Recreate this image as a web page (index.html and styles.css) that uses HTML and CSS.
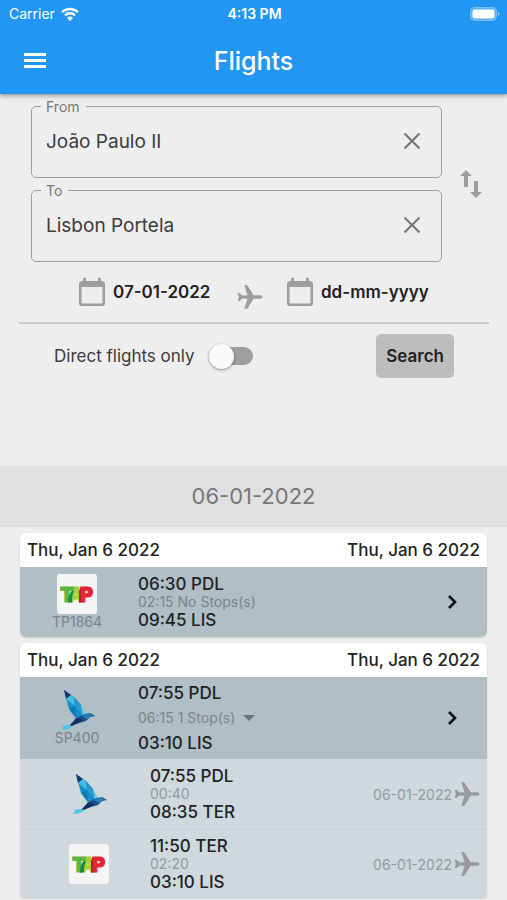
FILE: index.html
```
<!DOCTYPE html>
<html lang="en">
<head>
  <meta charset="utf-8">
  <meta name="viewport" content="width=device-width, initial-scale=1">
  <title>Flights</title>
  <link rel="stylesheet" href="styles.css">
</head>
<body>
  <!-- shared icons -->
  <svg class="defs" aria-hidden="true">
    <symbol id="plane" viewBox="1 1 23 22">
      <path d="M22.3 10.4H15.8L10.500 1.900Q9.900 1 8.900 1H7.300L10.200 10.400 5.300 10.700 3.300 8.300H1.200L2.300 12 1.200 15.700H3.300L5.300 13.300 10.200 13.600 7.300 23H8.900Q9.900 23 10.500 22.100L15.800 13.600H22.300A1.600 1.600 0 0 0 22.300 10.400Z"/>
    </symbol>
    <symbol id="calendar" viewBox="0 0 26 28">
      <path fill-rule="evenodd" d="M4 0h3v3h12V0h3v3h1a3 3 0 0 1 3 3v19a3 3 0 0 1-3 3H3a3 3 0 0 1-3-3V6a3 3 0 0 1 3-3h1zM2.500 9v15.500a1 1 0 0 0 1 1h19a1 1 0 0 0 1-1V9z"/>
    </symbol>
    <symbol id="clear" viewBox="0 0 18 18">
      <path d="M1.500 1.500l15 15M16.500 1.500l-15 15" fill="none" stroke="currentColor" stroke-width="2"/>
    </symbol>
    <symbol id="chevron" viewBox="0 0 24 24">
      <path d="M9 6l6 6-6 6" fill="none" stroke="currentColor" stroke-width="2.600"/>
    </symbol>
    <symbol id="tap" viewBox="0 0 40 40">
      <rect width="40" height="40" rx="3" fill="#f5f5f5"/>
      <g class="tap-text">
        <text x="11" y="28" fill="#a9cf38" stroke="#a9cf38">A</text>
        <text x="3" y="28" fill="#5cb53c" stroke="#5cb53c">T</text>
        <text x="23" y="28" fill="#e42534" stroke="#e42534">P</text>
      </g>
      <path d="M11 28.500c0-5 1-9 4-12l2 1c-2 4-2 7-2 11z" fill="#169044"/>
      <path d="M22 17l2-4v15.500h-2z" fill="#b81d2b"/>
    </symbol>
    <symbol id="bird" viewBox="0 0 40 40">
      <path d="M7 0l10 7 7 8 2 11-7 2-7-9z" fill="#178fc9"/>
      <path d="M7 0l7 5-5 4z" fill="#17356e"/>
      <path d="M14 5l3 2 1 9-9-7z" fill="#45bce8"/>
      <path d="M18 16l-6 3 7 9z" fill="#087bb8"/>
      <path d="M17 7l7 8 2 11-8-10z" fill="#2998d1"/>
      <path d="M24 15l2 11 3-3z" fill="#65cdeb"/>
      <path d="M19 28l9-4 5-1 5 3-5 1-4 4-10 3-8 4z" fill="#19508c"/>
      <path d="M25 26l8-3 2 3-5 3z" fill="#2d7fb5"/>
      <path d="M20 28l6 2-7 4-8 3z" fill="#142d64"/>
      <path d="M11 35l-7 1 3 1-3 3 7-1 5-3z" fill="#4cc7ec"/>
    </symbol>
  </svg>

  <header class="top">
    <div class="status">
      <span class="carrier">Carrier
        <svg width="18" height="14" viewBox="0 0 18 14" fill="none" stroke="#fff" stroke-width="2.400">
          <path d="M1 5.200a11.500 11.500 0 0 1 16 0M4 8.400a7 7 0 0 1 10 0"/>
          <path d="M9 14l-3-3a4.300 4.300 0 0 1 6 0z" fill="#fff" stroke="none"/>
        </svg>
      </span>
      <span class="clock">4:13 PM</span>
      <svg class="battery" width="30" height="14" viewBox="0 0 30 14">
        <rect x=".5" y=".5" width="26" height="13" rx="4" fill="#59b0f8" stroke="#7cc1f9"/>
        <rect x="2.500" y="2.500" width="22" height="9" rx="2" fill="#fff"/>
        <path d="M28 5c2 1 2 3 0 4z" fill="#8dcafa"/>
      </svg>
    </div>
    <div class="appbar">
      <button class="icon-btn" aria-label="Menu">
        <svg width="22" height="16" viewBox="0 0 22 16" fill="#fff"><path d="M0 0h22v3H0zM0 6h22v3H0zM0 12h22v3H0z"/></svg>
      </button>
      <h1>Flights</h1>
    </div>
  </header>

  <form class="search" onsubmit="return false">
    <div class="route">
      <div class="places">
        <fieldset>
          <legend><label for="from">From</label></legend>
          <div class="place">
            <input id="from" type="text" value="João Paulo II">
            <button type="button" class="icon-btn" aria-label="Clear from"><svg width="18" height="18"><use href="#clear"/></svg></button>
          </div>
        </fieldset>
        <fieldset>
          <legend><label for="to">To</label></legend>
          <div class="place">
            <input id="to" type="text" value="Lisbon Portela">
            <button type="button" class="icon-btn" aria-label="Clear to"><svg width="18" height="18"><use href="#clear"/></svg></button>
          </div>
        </fieldset>
      </div>
      <button type="button" class="icon-btn swap" aria-label="Swap airports">
        <svg width="22" height="28" viewBox="0 0 22 28"><path d="M6 0l6 6H8v11H4V6H0zM14 11h4v11h4l-6 6-6-6h4z"/></svg>
      </button>
    </div>

    <div class="dates">
      <label class="date">
        <svg width="26" height="28"><use href="#calendar"/></svg>
        <input type="text" value="07-01-2022" aria-label="Departure date">
      </label>
      <svg class="between" width="26" height="34" viewBox="0 -10 26 34"><use href="#plane" width="26" height="24"/></svg>
      <label class="date">
        <svg width="26" height="28"><use href="#calendar"/></svg>
        <input type="text" placeholder="dd-mm-yyyy" aria-label="Return date">
      </label>
    </div>

    <div class="options">
      <label class="direct">Direct flights only <input type="checkbox" class="switch"></label>
      <button class="submit">Search</button>
    </div>
  </form>

  <h2 class="day">06-01-2022</h2>

  <main class="results">
    <article class="card">
      <div class="card-head"><span>Thu, Jan 6 2022</span><span>Thu, Jan 6 2022</span></div>
      <div class="flight">
        <div class="airline">
          <svg width="40" height="40"><use href="#tap"/></svg>
          <span>TP1864</span>
        </div>
        <div class="times">
          <div>06:30 PDL</div>
          <div class="info">02:15 No Stops(s)</div>
          <div>09:45 LIS</div>
        </div>
        <button class="icon-btn open" aria-label="Open flight"><svg width="24" height="24"><use href="#chevron"/></svg></button>
      </div>
    </article>

    <article class="card">
      <div class="card-head"><span>Thu, Jan 6 2022</span><span>Thu, Jan 6 2022</span></div>
      <div class="flight">
        <div class="airline">
          <svg width="40" height="40"><use href="#bird"/></svg>
          <span>SP400</span>
        </div>
        <div class="times">
          <div>07:55 PDL</div>
          <button class="info stops">06:15 1 Stop(s)
            <svg width="12" height="6" viewBox="0 0 12 6"><path d="M0 0h12L6 6z"/></svg>
          </button>
          <div>03:10 LIS</div>
        </div>
        <button class="icon-btn open" aria-label="Open flight"><svg width="24" height="24"><use href="#chevron"/></svg></button>
      </div>
      <div class="flight leg">
        <div class="airline"><svg width="40" height="40"><use href="#bird"/></svg></div>
        <div class="times">
          <div>07:55 PDL</div>
          <div class="info">00:40</div>
          <div>08:35 TER</div>
        </div>
        <div class="leg-date">06-01-2022 <svg width="26" height="24"><use href="#plane"/></svg></div>
      </div>
      <div class="flight leg">
        <div class="airline"><svg width="40" height="40"><use href="#tap"/></svg></div>
        <div class="times">
          <div>11:50 TER</div>
          <div class="info">02:20</div>
          <div>03:10 LIS</div>
        </div>
        <div class="leg-date">06-01-2022 <svg width="26" height="24"><use href="#plane"/></svg></div>
      </div>
    </article>
  </main>
</body>
</html>
```
FILE: styles.css
```
* {
  box-sizing: border-box;
}

body {
  margin: 0;
  background: #eee;
  color: #222;
  font-family: Inter, "Liberation Sans", sans-serif;
  font-size: 17px;
}

svg {
  display: block;
  flex: none;
}

button, input {
  font: inherit;
  color: inherit;
  border: 0;
  padding: 0;
  background: none;
}

.defs {
  display: none;
}

.tap-text {
  font-size: 20px;
  font-weight: 900;
  stroke-width: 1px;
}

.icon-btn {
  display: flex;
  align-items: center;
  justify-content: center;
}

/* header */
.top {
  background: #2196f3;
  color: #fff;
  box-shadow: 0 1px 5px rgba(0, 0, 0, 0.5);
}

.status {
  display: grid;
  grid-template-columns: 1fr auto 1fr;
  align-items: center;
  height: 27px;
  padding: 0 7px 0 9px;
  font-size: 14px;
}

.carrier {
  display: flex;
  align-items: center;
  gap: 6px;
}

.clock {
  font-weight: 600;
}

.battery {
  justify-self: end;
}

.appbar {
  display: grid;
  grid-template-columns: 1fr auto 1fr;
  align-items: center;
  height: 67px;
  padding: 0 24px;
}

.appbar .icon-btn {
  justify-self: start;
}

h1 {
  margin: 0;
  font-size: 25px;
  font-weight: 500;
}

/* search form */
.search {
  padding: 5px 18px 88px 19px;
}

.route {
  display: grid;
  grid-template-columns: 1fr 36px;
  gap: 11px;
  padding-left: 12px;
}

.places {
  display: grid;
  gap: 5px;
}

fieldset {
  min-width: 0;
  margin: 0;
  padding: 0 20px 9px 14px;
  border: 1px solid #9e9e9e;
  border-radius: 5px;
}

legend {
  margin-left: -5px;
  padding: 0 6px 0 5px;
  color: #777;
  font-size: 14px;
  line-height: 15px;
}

.place {
  display: flex;
  align-items: center;
  height: 54px;
}

.place input {
  flex: 1;
  min-width: 0;
  font-size: 19px;
  color: #3c3c3c;
}

.place .icon-btn {
  color: #757575;
}

.swap, .between {
  fill: #9e9e9e;
}

.swap {
  padding-top: 7px;
}

.dates {
  display: flex;
  align-items: center;
  justify-content: center;
  gap: 24px;
  height: 62px;
  border-bottom: 2px solid #ccc;
}

.date {
  display: flex;
  align-items: center;
  gap: 8px;
  fill: #9e9e9e;
}

.date input {
  width: 100px;
  font-weight: 600;
}

.date:last-child input {
  width: 108px;
}

.date input::placeholder {
  color: #222;
  opacity: 1;
}

.options {
  display: flex;
  align-items: center;
  justify-content: space-between;
  padding: 10px 35px 0;
}

.direct {
  display: flex;
  align-items: center;
  gap: 14px;
  color: #3c3c3c;
}

.switch {
  appearance: none;
  display: flex;
  align-items: center;
  width: 44px;
  height: 18px;
  margin: 0;
  border-radius: 9px;
  background: #9e9e9e;
}

.switch::before {
  content: "";
  width: 25px;
  height: 25px;
  border-radius: 50%;
  background: #fafafa;
  box-shadow: 0 1px 3px rgba(0, 0, 0, 0.4);
}

.switch:checked {
  justify-content: flex-end;
}

.submit {
  height: 44px;
  padding: 0 10px;
  border-radius: 5px;
  background: #bdbdbd;
  font-weight: 600;
}

/* results */
.day {
  margin: 0;
  background: #e0e0e0;
  color: #777;
  font-size: 22px;
  font-weight: 400;
  line-height: 61px;
  text-align: center;
}

.results {
  display: grid;
  gap: 6px;
  padding: 6px 20px 0;
}

.card {
  overflow: hidden;
  border-radius: 6px;
  background: #fff;
  box-shadow: 0 1px 2px rgba(0, 0, 0, 0.15);
  font-weight: 500;
}

.card-head {
  display: flex;
  justify-content: space-between;
  padding: 0 7px;
  line-height: 34px;
}

.flight {
  display: grid;
  grid-template-columns: 114px 1fr auto;
  align-items: center;
  gap: 4px;
  padding: 7px 0;
  background: #b0bec5;
}

.airline {
  display: flex;
  flex-direction: column;
  align-items: center;
  color: #7b858a;
  font-size: 14px;
  font-weight: 400;
  line-height: 16px;
}

.times {
  line-height: 18px;
}

.info {
  color: #7b858a;
  font-size: 14px;
  font-weight: 400;
}

.stops {
  display: flex;
  align-items: center;
  gap: 8px;
  height: 32px;
  fill: #68747a;
}

.open {
  margin-right: 23px;
  color: #111;
}

.leg {
  height: 70px;
  padding: 0 7px 0 12px;
  background: #cfd8dc;
}

.leg + .leg {
  box-shadow: inset 0 1px #c6cfd3;
}

.leg .info, .leg-date {
  color: #949b9e;
}

.leg-date {
  display: flex;
  align-items: center;
  gap: 2px;
  font-size: 14px;
  font-weight: 400;
  fill: #999;
}
```
